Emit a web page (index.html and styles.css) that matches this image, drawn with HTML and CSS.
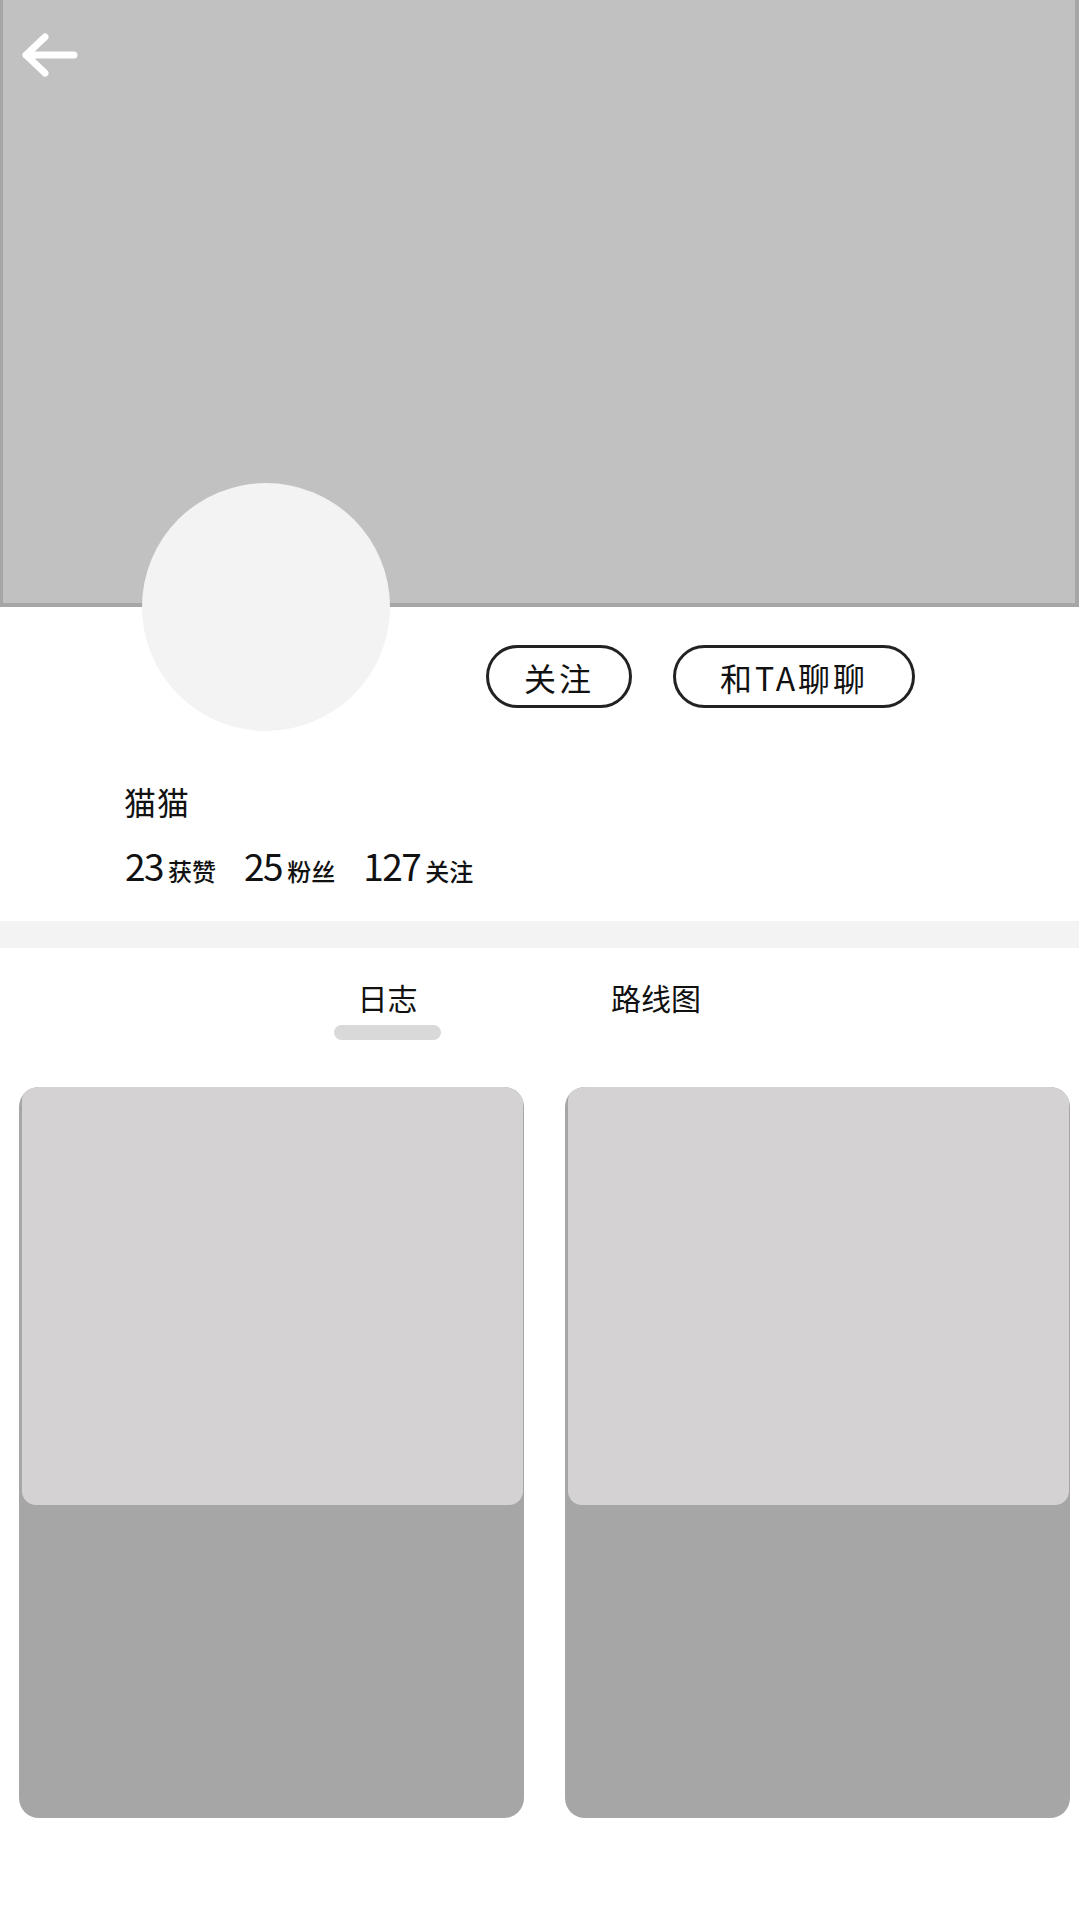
FILE: index.html
```html
<!DOCTYPE html>
<html lang="zh">
<head>
<meta charset="utf-8">
<title>猫猫</title>
<link rel="stylesheet" href="styles.css">
</head>
<body>
<div class="page">
  <header class="cover">
    <svg class="back" width="60" height="50" viewBox="0 0 60 50" aria-label="返回">
      <path d="M25 7 L6 25 L25 43 M6 25 H54" fill="none" stroke="#ffffff" stroke-width="7" stroke-linecap="round" stroke-linejoin="round"/>
    </svg>
  </header>

  <section class="profile">
    <div class="profile-row">
      <div class="avatar"></div>
      <div class="actions">
        <button class="btn btn-follow">关注</button>
        <button class="btn btn-chat">和TA聊聊</button>
      </div>
    </div>
    <div class="name">猫猫</div>
    <div class="stats">
      <div class="stat"><span class="num">23</span><span class="label">获赞</span></div>
      <div class="stat"><span class="num">25</span><span class="label">粉丝</span></div>
      <div class="stat"><span class="num">127</span><span class="label">关注</span></div>
    </div>
  </section>

  <div class="divider"></div>

  <nav class="tabs">
    <div class="tab tab-active">
      <span class="tab-text">日志</span>
      <span class="indicator"></span>
    </div>
    <div class="tab tab-route">
      <span class="tab-text">路线图</span>
    </div>
  </nav>

  <section class="cards">
    <div class="card"><div class="card-img"></div></div>
    <div class="card"><div class="card-img"></div></div>
  </section>
</div>
</body>
</html>
```
FILE: styles.css
```css
html, body {
  margin: 0;
  padding: 0;
  background: #ffffff;
}

body {
  font-family: "Noto Sans CJK SC", "Noto Sans", sans-serif;
  color: #111111;
}

.page {
  width: 1079px;
  min-height: 1920px;
  background: #ffffff;
}

.cover {
  box-sizing: border-box;
  height: 607px;
  background: #c1c1c1;
  border-left: 3px solid #a6a6a6;
  border-right: 4px solid #a6a6a6;
  border-bottom: 4px solid #a6a6a6;
  padding: 30px 0 0 17px;
}

.back {
  display: block;
}

.profile-row {
  display: flex;
  align-items: flex-start;
  padding-left: 142px;
}

.avatar {
  position: relative;
  width: 248px;
  height: 248px;
  margin-top: -124px;
  border-radius: 50%;
  background: #f3f3f3;
  flex: none;
}

.actions {
  display: flex;
  gap: 41px;
  margin-left: 96px;
  margin-top: 38px;
}

.btn {
  box-sizing: border-box;
  height: 63px;
  border: 3px solid #222222;
  border-radius: 32px;
  background: #ffffff;
  font-family: "Noto Sans CJK SC", sans-serif;
  font-size: 32px;
  line-height: 1;
  color: #111111;
  letter-spacing: 3px;
  padding: 0;
  display: flex;
  align-items: center;
  justify-content: center;
}

.btn-follow {
  width: 146px;
}

.btn-chat {
  width: 242px;
}

.name {
  margin-top: 54px;
  padding-left: 124px;
  font-size: 32px;
  line-height: 32px;
  letter-spacing: 1px;
}

.stats {
  display: flex;
  align-items: baseline;
  gap: 28px;
  margin-top: 30px;
  padding-left: 125px;
  line-height: 37px;
}

.stat {
  display: flex;
  align-items: baseline;
}

.num {
  font-size: 37px;
  letter-spacing: -1.5px;
}

.label {
  font-size: 24px;
  margin-left: 5px;
  font-weight: 500;
}

.divider {
  margin-top: 32px;
  height: 27px;
  background: #f3f3f3;
}

.tabs {
  display: flex;
  gap: 170px;
  padding-left: 334px;
  padding-top: 34px;
}

.tab {
  display: flex;
  flex-direction: column;
  align-items: center;
}

.tab-active {
  width: 107px;
}

.tab-route {
  width: 90px;
}

.tab-text {
  font-size: 30px;
  line-height: 30px;
  white-space: nowrap;
}

.indicator {
  display: block;
  width: 107px;
  height: 15px;
  margin-top: 13px;
  border-radius: 8px;
  background: #d9d9d9;
}

.cards {
  display: flex;
  gap: 41px;
  padding-left: 19px;
  margin-top: 47px;
}

.card {
  width: 505px;
  height: 731px;
  border-radius: 20px;
  background: #a6a6a6;
  overflow: hidden;
  padding: 0 1px 0 3px;
  box-sizing: border-box;
}

.card-img {
  height: 418px;
  border-radius: 14px;
  background: #d4d2d3;
}
```
